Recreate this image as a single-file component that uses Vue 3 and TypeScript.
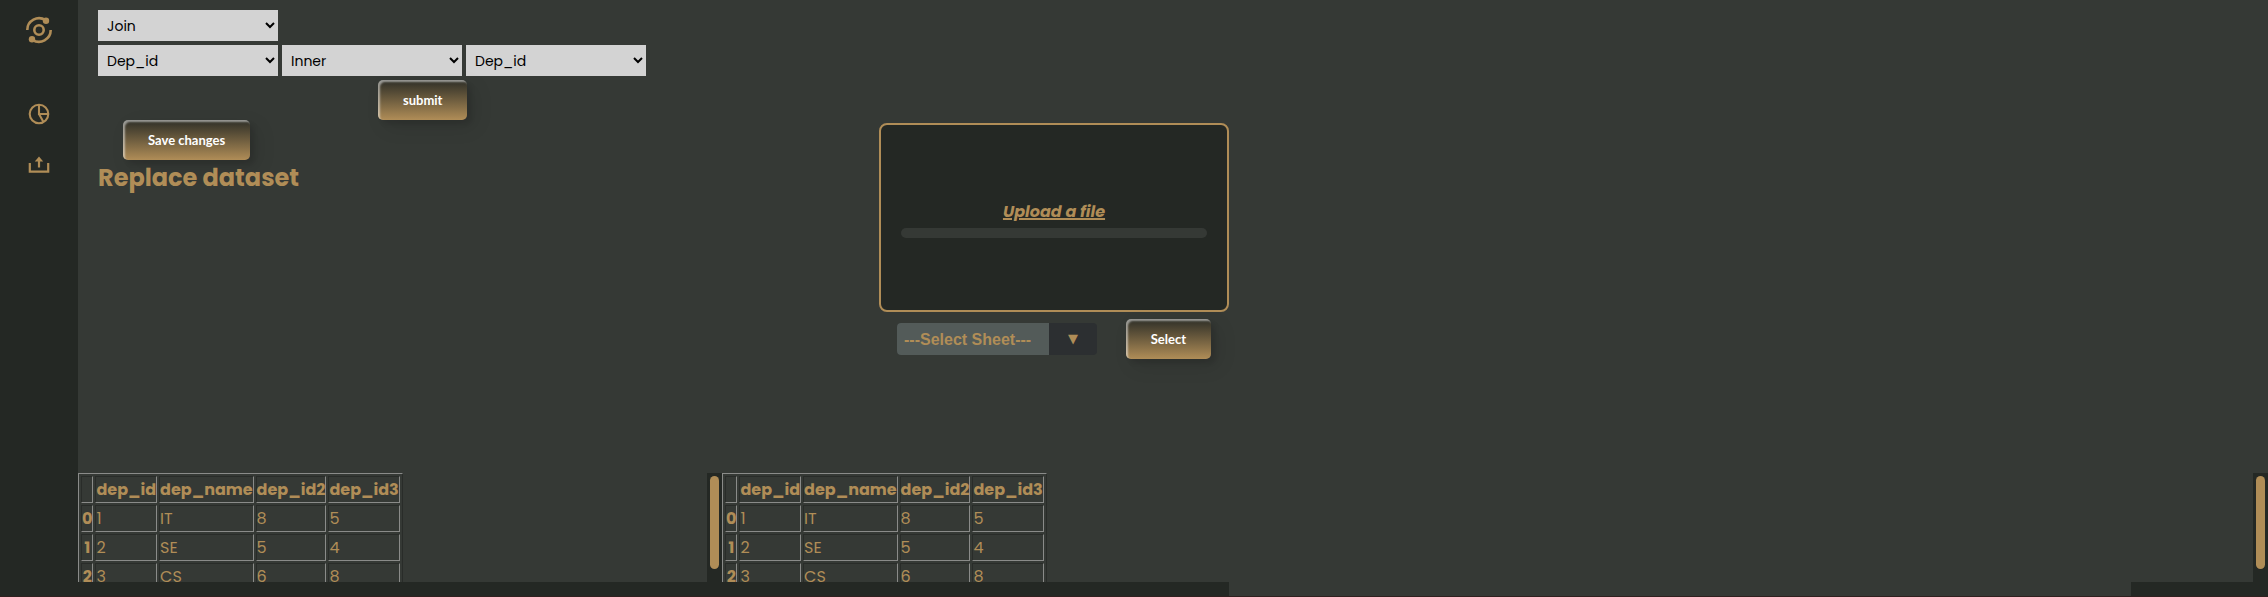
<script setup lang="ts">
import { ref } from 'vue'

interface Field {
  id: string
  label: string
  options: string[]
}

const operation = ref('Join')
const operations = ['Join', 'Concat', 'Merge']
const fields: Field[] = [
  { id: 'left-key', label: 'Left key', options: ['Dep_id', 'Dep_name'] },
  { id: 'join-type', label: 'Join type', options: ['Inner', 'Outer', 'Left', 'Right'] },
  { id: 'right-key', label: 'Right key', options: ['Dep_id', 'Dep_name'] },
]

const columns = ['dep_id', 'dep_name', 'dep_id2', 'dep_id3']
const rows: (string | number)[][] = [
  [1, 'IT', 8, 5],
  [2, 'SE', 5, 4],
  [3, 'CS', 6, 8],
]
const panes = ['source', 'result']
</script>

<template>
  <div class="page">
    <nav class="sidebar" aria-label="Main">
      <a href="#" class="logo" aria-label="Home">
        <svg width="28" height="28" viewBox="0 0 28 28" fill="none" stroke="currentColor" stroke-width="2.6">
          <circle cx="14" cy="14" r="4.7" />
          <path d="M2.3 14A11.7 11.7 0 0 1 20.5 4.2" />
          <path d="M25.7 14A11.7 11.7 0 0 1 7.5 23.8" />
          <circle cx="21" cy="4.7" r="3.2" fill="currentColor" stroke="none" />
          <circle cx="7" cy="23.3" r="3.2" fill="currentColor" stroke="none" />
        </svg>
      </a>
      <a href="#" class="charts" aria-label="Charts">
        <svg width="22" height="22" viewBox="0 0 22 22" fill="none" stroke="currentColor" stroke-width="2.1">
          <circle cx="11" cy="11" r="9.3" />
          <path d="M11 1.6V11H20.4M11 11L15.6 19.2" />
        </svg>
      </a>
      <a href="#" class="upload-link" aria-label="Upload">
        <svg width="22" height="18" viewBox="0 0 22 18" fill="none" stroke="currentColor" stroke-width="2.2">
          <path d="M1.8 7V15.6H20.2V7M11 11.5V4" />
          <path d="M11 0.5L15.2 5.5H6.8Z" fill="currentColor" stroke="none" />
        </svg>
      </a>
    </nav>

    <main class="main">
      <section class="top">
        <div class="editor">
          <select v-model="operation" class="field" aria-label="Operation">
            <option v-for="o in operations" :key="o">{{ o }}</option>
          </select>
          <form class="join" @submit.prevent>
            <div class="fields">
              <select v-for="f in fields" :key="f.id" class="field" :aria-label="f.label">
                <option v-for="o in f.options" :key="o">{{ o }}</option>
              </select>
            </div>
            <button class="btn submit" type="submit">submit</button>
          </form>
          <button class="btn save" type="button">Save changes</button>
          <h2>Replace dataset</h2>
        </div>

        <div class="uploader">
          <div class="dropzone">
            <a href="#" class="upload-text">Upload a file</a>
            <div class="progress" role="progressbar" aria-label="Upload progress" aria-valuenow="0"></div>
          </div>
          <div class="sheet-row">
            <div class="sheet">
              <select aria-label="Sheet">
                <option>---Select Sheet---</option>
              </select>
              <span class="arrow" aria-hidden="true">▼</span>
            </div>
            <button class="btn" type="button">Select</button>
          </div>
        </div>
      </section>

      <section class="panes">
        <div v-for="p in panes" :key="p" class="pane" :class="p">
          <div class="viewport">
            <table>
              <thead>
                <tr>
                  <th></th>
                  <th v-for="c in columns" :key="c">{{ c }}</th>
                </tr>
              </thead>
              <tbody>
                <tr v-for="(row, i) in rows" :key="i">
                  <th scope="row">{{ i }}</th>
                  <td v-for="(cell, j) in row" :key="j">{{ cell }}</td>
                </tr>
              </tbody>
            </table>
          </div>
          <div class="track"><div class="thumb"></div></div>
        </div>
      </section>

      <div class="strip"><span class="strip-left"></span><span class="strip-gap"></span><span class="strip-right"></span></div>
    </main>
  </div>
</template>

<style>
body {
  margin: 0;
  background: #353935;
}
</style>

<style scoped>
.page {
  --gold: #b08d57;
  --dark: #242824;
  display: flex;
  box-sizing: border-box;
  min-height: 100vh;
  border-bottom: 1px solid #30201f;
  background: #353935;
  color: var(--gold);
  font-family: Poppins, Inter, "Open Sans", sans-serif;
  font-size: 16px;
}
.sidebar {
  width: 78px;
  flex: none;
  display: flex;
  flex-direction: column;
  align-items: center;
  padding-top: 16px;
  box-sizing: border-box;
  background: var(--dark);
}
.sidebar a {
  color: var(--gold);
}
.sidebar svg {
  display: block;
}
.charts {
  margin-top: 59px;
}
.upload-link {
  margin-top: 31px;
}
.main {
  flex: 1;
  min-width: 0;
  display: flex;
  flex-direction: column;
}
.top {
  flex: 1;
  display: flex;
}
.editor {
  width: 801px;
  box-sizing: border-box;
  padding: 10px 20px 0;
  display: flex;
  flex-direction: column;
  align-items: flex-start;
}
.field {
  width: 180px;
  height: 31px;
  padding: 0 5px;
  border: 0;
  border-radius: 0;
  background: #d3d3d3;
  color: #000;
  font-family: inherit;
  font-size: 14px;
}
.join {
  display: flex;
  flex-direction: column;
  align-items: flex-start;
  margin-top: 4px;
}
.fields {
  display: flex;
  gap: 4px;
}
.btn {
  height: 40px;
  padding: 0 25px;
  border: 0;
  border-radius: 5px;
  background: linear-gradient(0deg, #b08d57 0%, #2d2e27 100%);
  box-shadow: inset 2px 2px 2px 0 rgba(255, 255, 255, 0.5), 7px 7px 20px 0 rgba(0, 0, 0, 0.1),
    4px 4px 5px 0 rgba(0, 0, 0, 0.1);
  color: #fff;
  font-family: Lato, sans-serif;
  font-size: 13px;
  font-weight: 700;
}
.submit {
  margin: 4px 0 0 280px;
}
.save {
  margin-left: 25px;
}
h2 {
  margin: 0;
  font-size: 24px;
  line-height: 36px;
  font-weight: 700;
}
.uploader {
  width: 350px;
  padding-top: 123px;
}
.dropzone {
  height: 189px;
  box-sizing: border-box;
  padding: 0 20px;
  border: 2px solid var(--gold);
  border-radius: 8px;
  background: var(--dark);
  display: flex;
  flex-direction: column;
  justify-content: center;
  align-items: center;
}
.upload-text {
  margin-bottom: 2px;
  color: var(--gold);
  font-size: 16px;
  line-height: 28px;
  font-weight: 700;
  font-style: italic;
  text-decoration-thickness: 2px;
  text-underline-offset: 1px;
}
.progress {
  width: 100%;
  height: 10px;
  border-radius: 5px;
  background: #353935;
}
.sheet-row {
  display: flex;
  align-items: center;
  justify-content: space-between;
  padding: 7px 18px 0;
}
.sheet {
  width: 200px;
  height: 32px;
  display: flex;
  border-radius: 4px;
  overflow: hidden;
  background: #2c2f31;
}
.sheet select {
  flex: 1;
  min-width: 0;
  appearance: none;
  border: 0;
  border-radius: 0;
  padding: 0 7px;
  background: #535b59;
  color: var(--gold);
  font: 700 16px "Liberation Sans", sans-serif;
}
.arrow {
  width: 48px;
  line-height: 32px;
  text-align: center;
  font-family: "DejaVu Sans", sans-serif;
  font-size: 13px;
}
.panes {
  height: 109px;
  display: flex;
}
.pane {
  display: flex;
  min-width: 0;
}
.source {
  flex: 644;
}
.result {
  flex: 1546;
}
.viewport {
  flex: 1;
  min-width: 0;
  overflow: hidden;
}
table {
  border: 1px solid;
  border-color: #8a8b89 #292c29 #292c29 #8a8b89;
  border-spacing: 2px;
}
th,
td {
  height: 25px;
  padding: 0;
  border: 1px solid;
  border-color: #292c29 #8a8b89 #8a8b89 #292c29;
  line-height: 25px;
  white-space: nowrap;
}
th {
  font-weight: 700;
  text-align: center;
}
td {
  text-align: left;
}
.track {
  width: 15px;
  flex: none;
  box-sizing: border-box;
  padding: 3px;
  background: var(--dark);
}
.thumb {
  height: 93px;
  border-radius: 5px;
  background: var(--gold);
}
.strip {
  height: 14px;
  display: flex;
}
.strip-left {
  flex: 1151;
  background: var(--dark);
}
.strip-gap {
  flex: 902;
}
.strip-right {
  flex: 137;
  background: var(--dark);
}
</style>
